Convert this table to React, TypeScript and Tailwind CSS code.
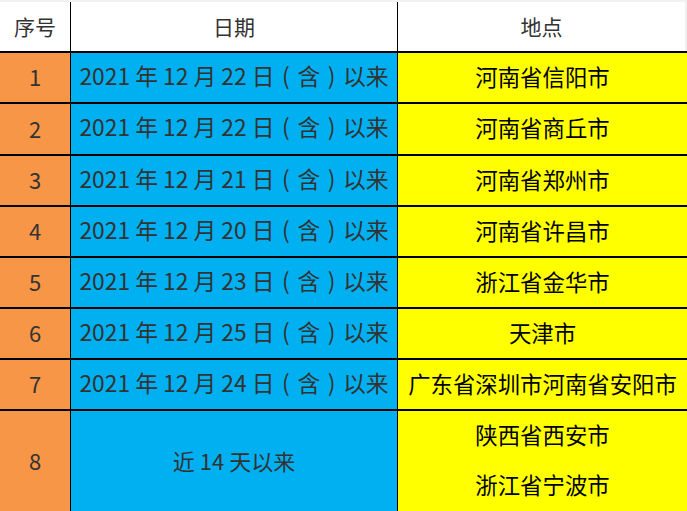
import React from "react";

const rows: { n: string; d: string; place: string; h: string }[] = [
  { n: "1", d: "22", place: "河南省信阳市", h: "h-[51px]" },
  { n: "2", d: "22", place: "河南省商丘市", h: "h-[52px]" },
  { n: "3", d: "21", place: "河南省郑州市", h: "h-[51px]" },
  { n: "4", d: "20", place: "河南省许昌市", h: "h-[51px]" },
  { n: "5", d: "23", place: "浙江省金华市", h: "h-[51px]" },
  { n: "6", d: "25", place: "天津市", h: "h-[51px]" },
  { n: "7", d: "24", place: "广东省深圳市河南省安阳市", h: "h-[51px]" },
];

const font = { fontFamily: '"Noto Sans CJK SC", "Noto Sans", sans-serif' };

function DateText({ d }: { d: string }) {
  return (
    <span className="whitespace-nowrap text-[22.8px]">
      {`2021 年 12 月 ${d} 日`}
      <span className="inline-block w-[1em] text-center">(</span>
      含
      <span className="inline-block w-[1em] text-center">)</span>
      以来
    </span>
  );
}

export default function App() {
  return (
    <div className="w-[687px] h-[511px] overflow-hidden bg-white text-[22px] leading-none" style={font}>
      <div className="h-[2px] bg-[#f2f2f2]" />
      <div className="grid grid-cols-[71px_327px_1fr] h-[49px] text-[#333]">
        <div className="border-r border-black flex items-center justify-center text-[21px]">序号</div>
        <div className="border-r border-black flex items-center justify-center text-[21px]">日期</div>
        <div className="border-r-2 border-[#f0f0f0] flex items-center justify-center text-[21px]">地点</div>
      </div>
      {rows.map((r) => (
        <div key={r.n} className={`grid grid-cols-[71px_327px_1fr] ${r.h} border-t-2 border-black`}>
          <div className="bg-[#f79646] border-r border-black flex items-center justify-center pb-[3px] text-[#333]">{r.n}</div>
          <div className="bg-[#00b0f0] border-r border-black flex items-center justify-center pb-[3px] text-[#333]">
            <DateText d={r.d} />
          </div>
          <div className="bg-[#ffff00] flex items-center justify-center pb-[3px] text-black whitespace-nowrap text-[22.4px]">{r.place}</div>
        </div>
      ))}
      <div className="grid grid-cols-[71px_327px_1fr] h-[102px] border-t-2 border-black">
        <div className="bg-[#f79646] border-r border-black flex items-center justify-center pb-[3px] text-[#333]">8</div>
        <div className="bg-[#00b0f0] border-r border-black flex items-center justify-center pb-[3px] text-[#333]">近 14 天以来</div>
        <div className="bg-[#ffff00] flex flex-col text-black text-[22.4px]">
          <div className="h-[50px] flex items-center justify-center pb-[3px]">陕西省西安市</div>
          <div className="h-[50px] flex items-center justify-center pb-[3px]">浙江省宁波市</div>
        </div>
      </div>
    </div>
  );
}
